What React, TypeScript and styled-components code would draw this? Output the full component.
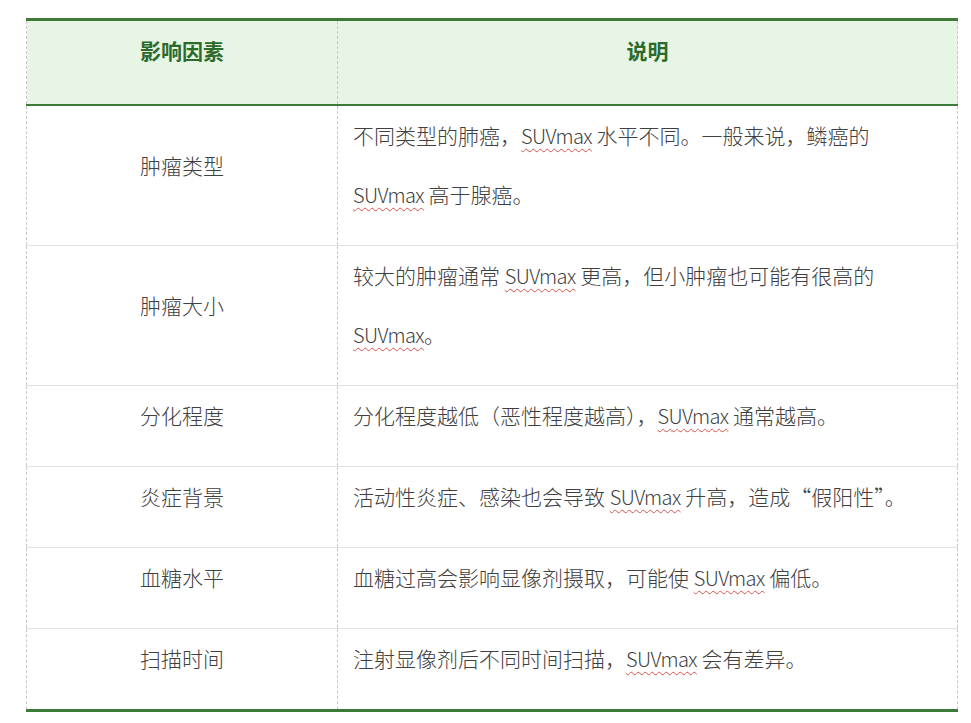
import React from "react";
import styled, { createGlobalStyle } from "styled-components";

const GlobalStyle = createGlobalStyle`
  html, body {
    margin: 0;
    padding: 0;
    background: #ffffff;
  }
  body {
    font-family: "Noto Sans CJK SC", "Microsoft YaHei", sans-serif;
  }
`;

const Page = styled.div`
  padding: 18px 13px 0 26px;
`;

const Table = styled.table`
  width: 932px;
  border-collapse: collapse;
  table-layout: fixed;
  font-family: "Noto Sans CJK SC", sans-serif;
  font-size: 21px;
  color: #404040;
  border-top: 3px solid #3d7a3a;
  border-bottom: 3px solid #3d7a3a;
`;

const HeadRow = styled.tr`
  background: #e7f5e5;
  border-bottom: 2px solid #3d7a3a;
`;

const HeadCell = styled.th`
  padding: 0 15px 25px;
  height: 83px;
  box-sizing: border-box;
  line-height: 58px;
  font-weight: 700;
  color: #2c6a2c;
  text-align: center;
  vertical-align: top;
  border-left: 1px dashed #c8c8c8;
  border-right: 1px dashed #c8c8c8;
`;

const Row = styled.tr`
  border-top: 1px solid #e2e2e2;
`;

const Cell = styled.td<{ $center?: boolean }>`
  padding: 0 15px 21px;
  line-height: 59px;
  text-align: ${(p) => (p.$center ? "center" : "left")};
  vertical-align: ${(p) => (p.$center ? "middle" : "top")};
  border-left: 1px dashed #c8c8c8;
  border-right: 1px dashed #c8c8c8;
  font-weight: 300;
`;

const Spell = styled.span`
  font-size: 20px;
  line-height: 1;
  letter-spacing: -0.6px;
  text-decoration-line: underline;
  text-decoration-style: wavy;
  text-decoration-color: #d9534f;
  text-decoration-thickness: 1px;
  text-underline-offset: 4px;
`;

const S = () => <Spell>SUVmax</Spell>;

const rows: { factor: string; desc: React.ReactNode }[] = [
  {
    factor: "肿瘤类型",
    desc: (
      <>
        不同类型的肺癌，<S /> 水平不同。一般来说，鳞癌的
        <br />
        <S /> 高于腺癌。
      </>
    ),
  },
  {
    factor: "肿瘤大小",
    desc: (
      <>
        较大的肿瘤通常 <S /> 更高，但小肿瘤也可能有很高的
        <br />
        <S />。
      </>
    ),
  },
  {
    factor: "分化程度",
    desc: (
      <>
        分化程度越低（恶性程度越高），<S /> 通常越高。
      </>
    ),
  },
  {
    factor: "炎症背景",
    desc: (
      <>
        活动性炎症、感染也会导致 <S /> 升高，造成“假阳性”。
      </>
    ),
  },
  {
    factor: "血糖水平",
    desc: (
      <>
        血糖过高会影响显像剂摄取，可能使 <S /> 偏低。
      </>
    ),
  },
  {
    factor: "扫描时间",
    desc: (
      <>
        注射显像剂后不同时间扫描，<S /> 会有差异。
      </>
    ),
  },
];

export default function App() {
  return (
    <>
      <GlobalStyle />
      <Page>
        <Table>
          <colgroup>
            <col style={{ width: "311px" }} />
            <col />
          </colgroup>
          <thead>
            <HeadRow>
              <HeadCell>影响因素</HeadCell>
              <HeadCell>说明</HeadCell>
            </HeadRow>
          </thead>
          <tbody>
            {rows.map((r, i) => (
              <Row key={i}>
                <Cell $center>{r.factor}</Cell>
                <Cell>{r.desc}</Cell>
              </Row>
            ))}
          </tbody>
        </Table>
      </Page>
    </>
  );
}
